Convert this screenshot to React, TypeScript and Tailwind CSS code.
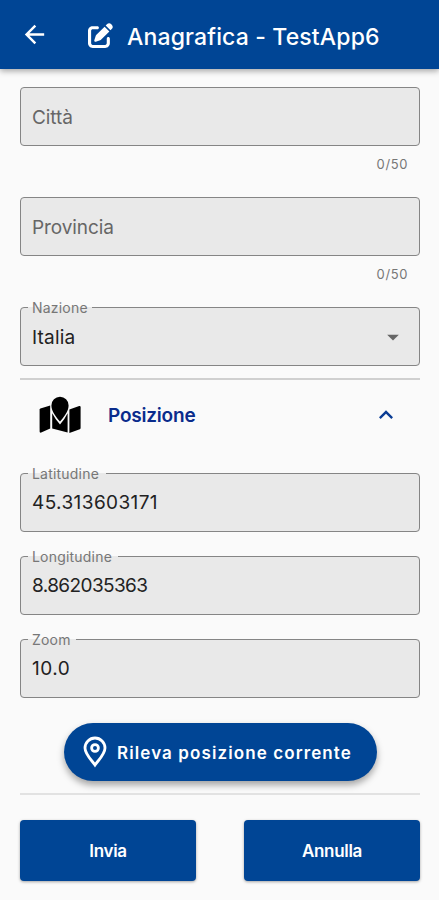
import type { ReactNode } from 'react';
import { FaPenToSquare } from 'react-icons/fa6';
import { MdArrowBack, MdArrowDropDown, MdKeyboardArrowUp } from 'react-icons/md';

export default function App() {
  return (
    <div className="h-[900px] w-[439px] overflow-hidden bg-[#fafafa] font-['Inter','Roboto',sans-serif] text-[#222]">
      <header className="flex h-[69px] items-center bg-[#004595] pb-px pl-5 text-white shadow-[0_2px_6px_rgba(0,0,0,0.35)]">
        <MdArrowBack size={29} />
        <FaPenToSquare size={25} className="ml-[39px] mt-[2px]" />
        <h1 className="ml-[14px] mt-[5px] whitespace-nowrap text-[23px] font-medium leading-8 tracking-[0.15px]">
          Anagrafica - TestApp6
        </h1>
      </header>

      <main className="flex flex-col pl-5 pr-[19px] pt-[18px]">
        <EmptyField label="Città" />
        <EmptyField label="Provincia" />
        <Field label="Nazione" legendWidth="w-[64px]" value="Italia" spacing="tracking-[0.2px] pt-[3px]">
          <MdArrowDropDown size={28} className="mr-3 text-[#666]" />
        </Field>

        <hr className="mt-3 border-t-2 border-[#d0d0d0]" />
        <div className="mb-[27px] flex h-[66px] items-center pl-[18px] pt-1">
          <MapIcon />
          <span className="ml-[26px] mt-[3px] text-[19px] font-semibold tracking-[-0.2px] text-[#0a2c8c]">Posizione</span>
          <MdKeyboardArrowUp size={28} className="ml-auto mr-5 text-[#0a3c94]" />
        </div>

        <div className="flex flex-col gap-6">
          <Field label="Latitudine" legendWidth="w-[78px]" value="45.313603171" spacing="tracking-[0.4px] pt-[2px]" />
          <Field label="Longitudine" legendWidth="w-[90px]" value="8.862035363" spacing="tracking-[-0.6px] pt-[2px]" />
          <Field label="Zoom" legendWidth="w-[48px]" value="10.0" spacing="tracking-[0.5px] pt-[2px]" />
        </div>

        <button className="ml-11 mt-[25px] flex h-[58px] w-[313px] items-center rounded-full bg-[#004595] pl-[19px] text-white shadow-[0_4px_7px_rgba(0,0,0,0.35)]">
          <PinIcon />
          <span className="ml-[10px] mt-[3px] whitespace-nowrap text-[17px] font-semibold tracking-[1.1px]">
            Rileva posizione corrente
          </span>
        </button>

        <hr className="mt-3 border-t-2 border-[#e2e2e2]" />
        <div className="mt-[25px] flex justify-between">
          <ActionButton>Invia</ActionButton>
          <ActionButton>Annulla</ActionButton>
        </div>
      </main>
    </div>
  );
}

function EmptyField({ label }: { label: string }) {
  return (
    <div className="h-[110px]">
      <div className="flex h-[59px] items-center rounded-[4px] border border-[#858585] bg-[#e9e9e9] pl-[11px] pt-[3px] text-[19px] tracking-[-0.1px] text-[#666]">
        {label}
      </div>
      <p className="mt-[9px] pr-3 text-right text-[13px] leading-[18px] tracking-[0.6px] text-[#777]">0/50</p>
    </div>
  );
}

type FieldProps = {
  label: string;
  legendWidth: string;
  value: string;
  spacing: string;
  children?: ReactNode;
};

// The legend cuts the top border, so the box starts 7px above the visible outline
function Field({ label, legendWidth, value, spacing, children }: FieldProps) {
  return (
    <fieldset className="-mt-[7px] h-[66px] min-w-0 rounded-[4px] border border-[#858585] bg-[#e9e9e9]">
      <legend className={`ml-[7px] h-[15px] whitespace-nowrap pl-1 text-[14px] leading-4 tracking-[0.2px] text-[#777] ${legendWidth}`}>
        {label}
      </legend>
      <div className="flex h-[43px] items-center justify-between pl-[11px]">
        <span className={`text-[19px] ${spacing}`}>{value}</span>
        {children}
      </div>
    </fieldset>
  );
}

function ActionButton({ children }: { children: ReactNode }) {
  return (
    <button className="h-[61px] w-[176px] rounded-[4px] bg-[#004595] pt-[2px] text-[17px] font-semibold tracking-[-0.3px] text-white shadow-[0_1px_3px_rgba(0,0,0,0.35)]">
      {children}
    </button>
  );
}

function MapIcon() {
  return (
    <svg width="44" height="38" viewBox="0 0 44 38" className="text-black" fill="currentColor">
      <path d="M1.6 13.6Q1.6 12.8 2.4 12.5L12.2 9.6V32.4L3.2 36.6Q1.6 37.2 1.6 35.6z" />
      <path d="M31.4 13.6 41.2 10q1.4-.4 1.4 1V32q0 .9-.8 1.3l-10.4 3.6z" />
      <path d="M14.2 17.2Q17.4 23.6 22 28.4 26.6 23.6 29.6 17.2V36.4L14.2 32.6z" />
      <path d="M22 25.4C18.6 21.4 13.4 15.6 13.4 9.4a8.6 8.6 0 0 1 17.2 0c0 6.2-5.2 12-8.6 16z" />
    </svg>
  );
}

function PinIcon() {
  return (
    <svg width="24" height="32" viewBox="0 0 24 32" fill="none" stroke="currentColor">
      <path d="M12 29C9.2 24.8 2 18.3 2 12a10 10 0 0 1 20 0c0 6.3-7.2 12.8-10 17z" strokeWidth="2.8" />
      <circle cx="12" cy="12" r="3.4" strokeWidth="2.8" />
    </svg>
  );
}
